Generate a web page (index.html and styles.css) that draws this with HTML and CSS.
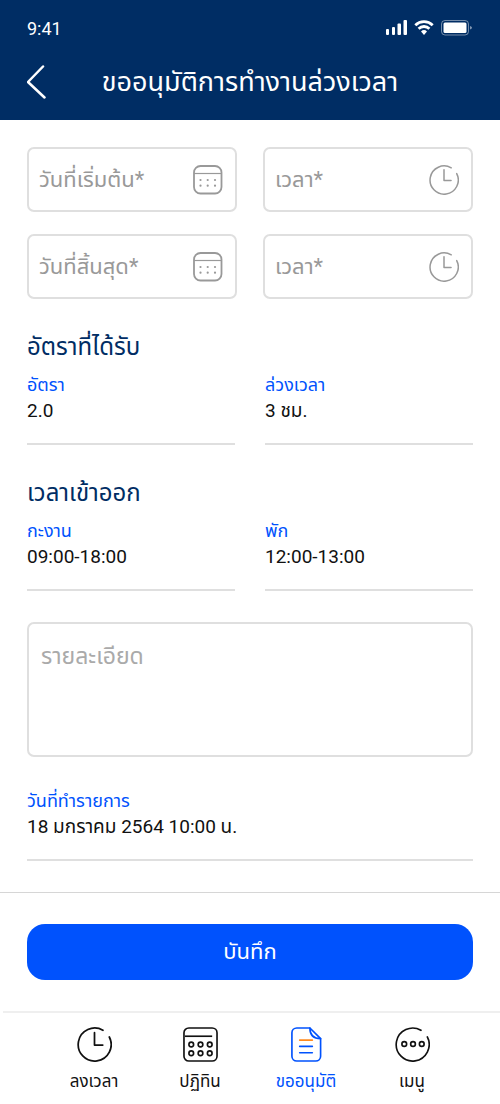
FILE: index.html
```html
<!DOCTYPE html>
<html lang="th">
<head>
<meta charset="utf-8">
<meta name="viewport" content="width=device-width, initial-scale=1">
<title>ขออนุมัติการทำงานล่วงเวลา</title>
<link rel="stylesheet" href="styles.css">
</head>
<body>
<svg class="sprite" aria-hidden="true">
  <symbol id="calendar" viewBox="0 0 30 30">
    <rect x="1" y="1" width="27.500" height="27.500" rx="6.500" fill="none" stroke="currentColor" stroke-width="1.800"/>
    <path d="M1 8.500h27" stroke="currentColor" stroke-width="1.200"/>
    <path d="M7.500 15h.01M14.700 15h.01M22 15h.01M7.500 20.700h.01M14.700 20.700h.01M22 20.700h.01" stroke="currentColor" stroke-width="2.200" stroke-linecap="round"/>
  </symbol>
  <symbol id="clock" viewBox="0 0 34 34">
    <path d="M25.200 3.200A16 16 0 1 0 31.400 9.700M17 5.500V17.500h8" fill="none" stroke="currentColor" stroke-width="1.700" stroke-linecap="round" stroke-linejoin="round"/>
  </symbol>
</svg>
<header class="header">
  <div class="status">
    <span>9:41</span>
    <svg class="status-icons" width="88" height="18" viewBox="0 0 88 18" fill="#fff" aria-hidden="true">
      <rect x="1" y="10" width="3" height="6" rx="1"/>
      <rect x="7" y="8" width="3" height="8" rx="1"/>
      <rect x="12.500" y="4.500" width="3.500" height="11.500" rx="1"/>
      <rect x="18.500" y="1" width="3.500" height="15" rx="1"/>
      <g fill="none" stroke="#fff" stroke-width="2.800">
        <path d="M30.300 6.200a12.600 12.600 0 0 1 17.400 0"/>
        <path d="M33.600 9.700a7.700 7.700 0 0 1 10.800 0"/>
      </g>
      <path d="M36 12.500a4.400 4.400 0 0 1 6 0L39 16z"/>
      <rect x="56.500" y="1.500" width="27" height="14.500" rx="3.500" fill="none" stroke="#fff" stroke-opacity=".45"/>
      <rect x="58.500" y="3.500" width="23" height="10.500" rx="1.500"/>
      <path d="M85.500 7v3.500a2 2 0 0 0 0-3.500"/>
    </svg>
  </div>
  <div class="title-bar">
    <button class="back" type="button" aria-label="ย้อนกลับ">
      <svg width="20" height="34" viewBox="0 0 20 34" fill="none" stroke="#fff" stroke-width="2.500" stroke-linecap="round" stroke-linejoin="round"><path d="M16 1.500L1 17 17.500 32.500"/></svg>
    </button>
    <h1 class="title">ขออนุมัติการทำงานล่วงเวลา</h1>
  </div>
</header>
<form class="form">
  <main class="content">
    <div class="fields">
      <div class="field"><input type="text" aria-label="วันที่เริ่มต้น" placeholder="วันที่เริ่มต้น*"><svg class="field-icon" aria-hidden="true"><use href="#calendar"/></svg></div>
      <div class="field"><input type="text" aria-label="เวลาเริ่มต้น" placeholder="เวลา*"><svg class="field-icon" aria-hidden="true"><use href="#clock"/></svg></div>
      <div class="field"><input type="text" aria-label="วันที่สิ้นสุด" placeholder="วันที่สิ้นสุด*"><svg class="field-icon" aria-hidden="true"><use href="#calendar"/></svg></div>
      <div class="field"><input type="text" aria-label="เวลาสิ้นสุด" placeholder="เวลา*"><svg class="field-icon" aria-hidden="true"><use href="#clock"/></svg></div>
    </div>
    <section class="section">
      <h2 class="heading">อัตราที่ได้รับ</h2>
      <dl class="details">
        <div class="detail"><dt>อัตรา</dt><dd>2.0</dd></div>
        <div class="detail"><dt>ล่วงเวลา</dt><dd>3 ชม.</dd></div>
      </dl>
    </section>
    <section class="section">
      <h2 class="heading">เวลาเข้าออก</h2>
      <dl class="details">
        <div class="detail"><dt>กะงาน</dt><dd>09:00-18:00</dd></div>
        <div class="detail"><dt>พัก</dt><dd>12:00-13:00</dd></div>
      </dl>
    </section>
    <textarea class="note" aria-label="รายละเอียด" placeholder="รายละเอียด"></textarea>
    <dl class="record">
      <div class="detail"><dt>วันที่ทำรายการ</dt><dd>18 มกราคม 2564 10:00 น.</dd></div>
    </dl>
  </main>
  <div class="actions"><button class="save" type="submit">บันทึก</button></div>
</form>
<nav class="nav">
  <a class="tab" href="#time"><svg class="tab-icon" aria-hidden="true"><use href="#clock"/></svg>ลงเวลา</a>
  <a class="tab" href="#calendar-page">
    <svg class="tab-icon" viewBox="0 0 36 36" fill="none" stroke="currentColor" stroke-width="1.700" aria-hidden="true">
      <rect x="1" y="1" width="34" height="34" rx="5"/><path d="M2 9.500h28"/>
      <circle cx="8.500" cy="18" r="2.400"/><circle cx="18" cy="18" r="2.400"/><circle cx="27.500" cy="18" r="2.400"/>
      <circle cx="8.500" cy="27" r="2.400"/><circle cx="18" cy="27" r="2.400"/><circle cx="27.500" cy="27" r="2.400"/>
    </svg>ปฏิทิน</a>
  <a class="tab tab-active" href="#approve" aria-current="page">
    <svg class="tab-icon" viewBox="0 0 36 36" fill="none" stroke="currentColor" stroke-width="1.700" stroke-linejoin="round" stroke-linecap="round" aria-hidden="true">
      <path d="M21.500 1H8a5 5 0 0 0-5 5v24a5 5 0 0 0 5 5h19.500a5 5 0 0 0 5-5V12z"/>
      <path d="M21.500 1c0 6.500 3 11 11 11"/><path d="M11 20h13M11 26.500h13"/><path d="M11 13.500h13" stroke="#ff8a1f"/>
    </svg>ขออนุมัติ</a>
  <a class="tab" href="#menu">
    <svg class="tab-icon" viewBox="0 0 34 34" fill="none" stroke="currentColor" stroke-width="1.600" stroke-linecap="round" aria-hidden="true">
      <path d="M25.200 3.200A16 16 0 1 0 31.400 9.700"/><circle cx="9" cy="16.500" r="2.300"/><circle cx="17.500" cy="16.500" r="2.300"/><circle cx="26" cy="16.500" r="2.300"/>
    </svg>เมนู</a>
</nav>
</body>
</html>
```
FILE: styles.css
```css
* { box-sizing: border-box; }
body {
  margin: 0;
  background: #fff;
  color: #111;
  font-family: Roboto, "Noto Sans Thai", "Noto Sans", sans-serif;
}
h1, h2, dl, dd { margin: 0; font-weight: 400; }
button, input, textarea { font: inherit; }
.sprite { display: none; }

.header { padding: 0 27px 12px; background: #002d64; color: #fff; }
.status {
  display: flex;
  align-items: center;
  justify-content: space-between;
  height: 56px;
  font-size: 18px;
}
.title-bar {
  display: grid;
  grid-template-columns: 24px 1fr 24px;
  align-items: center;
  height: 52px;
}
.back { display: flex; padding: 0; border: 0; background: none; }
.title { font-size: 27px; line-height: 36px; text-align: center; white-space: nowrap; }

.content { padding: 27px 27px 31px; }
.fields { display: grid; grid-template-columns: 1fr 1fr; gap: 22px 26px; }
.field {
  display: flex;
  align-items: center;
  min-width: 0;
  height: 65px;
  padding: 0 12px 0 10px;
  border: 2px solid #dfdfdf;
  border-radius: 7px;
}
.field input {
  flex: 1;
  width: 100%;
  min-width: 0;
  height: 48px;
  padding: 0;
  border: 0;
  outline: 0;
  background: none;
  font-size: 22px;
}
.field-icon { flex: none; width: 30px; height: 30px; color: #999; }
::placeholder { color: #999; opacity: 1; }

.section { margin-top: 32px; }
.heading { margin-bottom: 9px; color: #002d64; font-size: 24px; line-height: 32px; }
.details { display: grid; grid-template-columns: 1fr 1fr; gap: 30px; }
.detail { padding-bottom: 19px; border-bottom: 2px solid #dfdfdf; }
.detail dt { color: #0052fd; font-size: 18px; line-height: 26px; }
.detail dd { font-size: 19px; line-height: 26px; }
.note {
  display: block;
  width: 100%;
  height: 135px;
  margin-top: 31px;
  padding: 17px 12px;
  border: 2px solid #dfdfdf;
  border-radius: 7px;
  outline: 0;
  resize: none;
  font-size: 23px;
  line-height: 32px;
}
.note::placeholder { color: #aaa; }
.record { margin-top: 31px; }

.actions { padding: 31px 27px; border-top: 1px solid #d6d6d6; }
.save {
  display: block;
  width: 100%;
  height: 56px;
  border: 0;
  border-radius: 18px;
  background: #0052fd;
  color: #fff;
  font-size: 22px;
}
.nav {
  display: grid;
  grid-template-columns: repeat(4, 1fr);
  margin-left: 3px;
  padding: 14px 35px 8px 38px;
  border-top: 2px solid #efefef;
}
.tab {
  display: flex;
  flex-direction: column;
  align-items: center;
  gap: 6px;
  color: #111;
  font-size: 17px;
  line-height: 26px;
  text-decoration: none;
}
.tab-icon { width: 35px; height: 35px; }
.tab-active { color: #0052fd; }
```
